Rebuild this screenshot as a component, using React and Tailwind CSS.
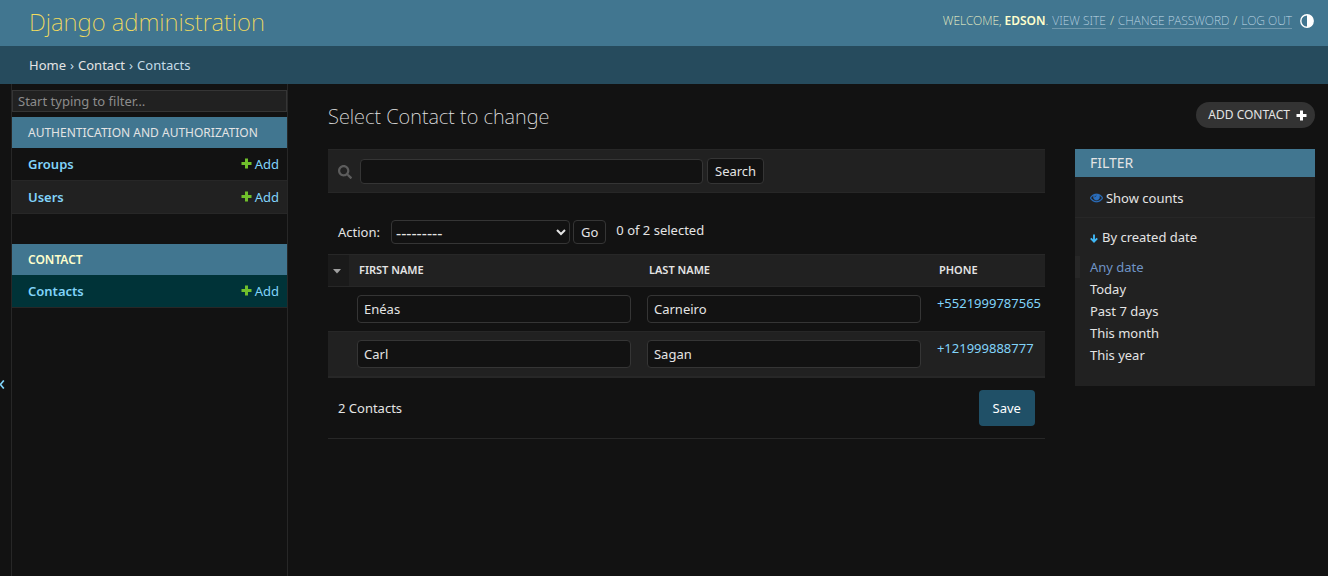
import React from "react";
import { FaSearch } from "react-icons/fa";

const contacts = [
  { id: 1, first: "Enéas", last: "Carneiro", phone: "+5521999787565" },
  { id: 2, first: "Carl", last: "Sagan", phone: "+121999888777" },
];

const dateFilters = ["Today", "Past 7 days", "This month", "This year"];

function PlusIcon({ className }) {
  return (
    <svg viewBox="0 0 11 11" className={className} aria-hidden="true">
      <path d="M4 0.500h3v3.500h3.500v3H7v3.500H4V7H0.500V4H4z" fill="currentColor" />
    </svg>
  );
}

function ThemeIcon() {
  return (
    <svg viewBox="0 0 14 14" className="size-3.5" aria-hidden="true">
      <circle cx="7" cy="7" r="6.2" fill="none" stroke="#fff" strokeWidth="1.4" />
      <path d="M7 0.8a6.2 6.2 0 0 1 0 12.4z" fill="#fff" />
    </svg>
  );
}

function EyeIcon() {
  return (
    <svg viewBox="0 0 1792 1792" className="mb-1 size-[13px]" aria-hidden="true">
      <path
        fill="#2b70bf"
        stroke="#2b70bf"
        strokeWidth="40"
        d="M1664 960q-152-236-381-353 61 104 61 225 0 185-131.500 316.500t-316.500 131.500-316.500-131.500-131.500-316.500q0-121 61-225-229 117-381 353 133 205 333.500 326.500t434.500 121.500 434.500-121.500 333.500-326.500zm-720-384q0-20-14-34t-34-14q-125 0-214.500 89.500t-89.500 214.500q0 20 14 34t34 14 34-14 14-34q0-86 61-147t147-61q20 0 34-14t14-34zm848 384q0 34-20 69-140 230-376.500 368.500t-499.500 138.500-499.500-139-376.500-368q-20-35-20-69t20-69q140-229 376.500-368t499.500-139 499.500 139 376.500 368q20 35 20 69z"
      />
      <circle cx="896" cy="832" r="300" fill="#2b70bf" />
      <path d="M720 832a176 176 0 0 1 176-176" fill="none" stroke="#212121" strokeWidth="70" />
    </svg>
  );
}

function ArrowIcon() {
  return (
    <svg viewBox="0 0 8 9" className="h-[9px] w-2" aria-hidden="true">
      <path d="M4 0.500V8M0.800 4.400L4 7.600L7.200 4.400" fill="none" stroke="#40b8f5" strokeWidth="1.900" />
    </svg>
  );
}

function ModelRow({ name, className }) {
  return (
    <li className={`flex h-[33px] items-center justify-between border-b border-[#272727] pt-0.5 pl-4 pr-2 text-[13px] text-[#81d4fa] ${className}`}>
      <a href={`#${name.toLowerCase()}`} className="font-semibold">{name}</a>
      <a href={`#add-${name.toLowerCase()}`} className="flex items-center gap-[3px]">
        <PlusIcon className="mb-1 size-[11px] text-[#70bf2b]" />
        Add
      </a>
    </li>
  );
}

function HeaderLink({ children }) {
  return (
    <a href="#account" className="border-b border-white/25 text-[#c4dce8]">
      {children}
    </a>
  );
}

function TextCell({ label, value }) {
  return (
    <td className="p-2 align-top">
      <input
        aria-label={label}
        defaultValue={value}
        className="block h-7 w-full rounded border border-[#353535] bg-[#121212] px-1.5 text-[13px] text-[#e4e4e4]"
      />
    </td>
  );
}

export default function App() {
  return (
    <div className="flex min-h-screen flex-col bg-[#121212] font-['Noto_Sans',sans-serif] text-[13px] text-[#e4e4e4]">
      <header className="flex h-[46px] items-center justify-between bg-[#417690] pl-[29px] pr-3.5 text-[#ffffcc]">
        <h1 className="pb-0.5 text-[24px] font-extralight text-[#f5dd5d]">
          <a href="#home">Django administration</a>
        </h1>
        <div className="flex items-center gap-2 pb-1">
          <div className="flex gap-1 text-[12px] leading-[14px] font-extralight uppercase">
            <span>Welcome, <strong className="font-semibold">Edson</strong>.</span>
            <HeaderLink>View site</HeaderLink>
            <span>/</span>
            <HeaderLink>Change password</HeaderLink>
            <span>/</span>
            <HeaderLink>Log out</HeaderLink>
          </div>
          <button type="button" aria-label="Toggle theme"><ThemeIcon /></button>
        </div>
      </header>

      <nav aria-label="Breadcrumbs" className="flex h-[38px] items-center gap-1 bg-[#264b5d] pt-0.5 pl-[29px] text-[13px] text-[#c4dce8]">
        <a href="#home" className="text-[#e4e4e4]">Home</a>
        <span>›</span>
        <a href="#contact" className="text-[#e4e4e4]">Contact</a>
        <span>›</span>
        <span>Contacts</span>
      </nav>

      <div className="flex grow">
        <button type="button" aria-label="Toggle navigation" className="flex w-3 shrink-0 items-center border-r border-[#272727] pt-[108px]">
          <svg viewBox="0 0 5 9" className="h-[9px] w-[5px]" aria-hidden="true">
            <path d="M3.800 0.500L0.400 4.500L3.800 8.500" fill="none" stroke="#81d4fa" strokeWidth="1.700" />
          </svg>
        </button>

        <nav aria-label="Sidebar" className="w-[276px] shrink-0 border-r border-[#272727] pt-1.5">
          <input
            aria-label="Filter navigation items"
            placeholder="Start typing to filter…"
            className="mb-[5px] block h-[22px] w-full border border-[#353535] bg-[#212121] px-[5px] text-[13px] placeholder:text-[#8c8c8c]"
          />
          <section className="mb-[30px]">
            <h2 className="flex h-[31px] items-center bg-[#417690] pl-4 text-xs uppercase">
              <a href="#auth">Authentication and Authorization</a>
            </h2>
            <ul>
              <ModelRow name="Groups" className="bg-[#121212]" />
              <ModelRow name="Users" className="bg-[#212121]" />
            </ul>
          </section>
          <section>
            <h2 className="flex h-[31px] items-center bg-[#417690] pl-4 text-xs font-semibold text-[#ffffcc] uppercase">
              <a href="#contact">Contact</a>
            </h2>
            <ul>
              <ModelRow name="Contacts" className="bg-[#003338]" />
            </ul>
          </section>
        </nav>

        <main className="min-w-0 grow pt-[18px] pr-[13px] pl-10">
          <div className="mb-[19px] flex items-start justify-between">
            <h2 className="pt-0.5 text-xl leading-[26px] font-extralight">Select Contact to change</h2>
            <a href="#add-contact" className="flex h-[26px] items-center gap-1.5 rounded-full bg-[#333333] pr-2 pl-3 text-xs uppercase">
              Add Contact
              <PlusIcon className="size-[11px] text-white" />
            </a>
          </div>

          <div className="flex items-start gap-[30px]">
            <div className="min-w-0 grow">
              <form className="flex h-11 items-center gap-1 border-y border-[#272727] bg-[#212121] pl-2.5" onSubmit={(e) => e.preventDefault()}>
                <label htmlFor="searchbar" className="flex w-[18px] pt-0.5 text-[#5c5c5c]">
                  <FaSearch className="size-3.5" aria-label="Search" />
                </label>
                <input id="searchbar" type="text" className="h-[25px] w-[343px] rounded border border-[#353535] bg-[#121212] px-1.5" />
                <button className="h-[26px] rounded border border-[#353535] bg-[#121212] px-[7px] pt-0.5">Search</button>
              </form>

              <div className="flex h-[61px] items-end pb-2.5 pl-2.5">
                <div className="flex h-6 items-center">
                  <label htmlFor="action" className="mr-[11px] pt-0.5">Action:</label>
                  <select id="action" className="mr-[3px] h-6 w-[179px] rounded border border-[#353535] bg-[#121212] text-base">
                    <option>---------</option>
                    <option>Delete selected Contacts</option>
                  </select>
                  <button type="button" className="mr-2.5 h-6 rounded border border-[#353535] bg-[#121212] px-[7px] pt-0.5">Go</button>
                  <span className="pb-0.5">0 of 2 selected</span>
                </div>
              </div>

              <table className="w-full table-fixed border-collapse">
                <thead>
                  <tr className="h-8 border-y border-[#272727] bg-[#212121] text-left text-[11px] leading-4 uppercase">
                    <th className="w-[21px] bg-[#1a1a1a]">
                      <svg viewBox="0 0 8 5" className="mt-0.5 ml-[5px] h-[5px] w-2" aria-label="Select all">
                        <path d="M0 0h8L4 4.500z" fill="#a0a0a0" />
                      </svg>
                    </th>
                    <th className="px-2.5 pb-0.5 font-semibold">First name</th>
                    <th className="px-2.5 pb-0.5 font-semibold">Last name</th>
                    <th className="w-[116px] px-2.5 pb-0.5 font-semibold">Phone</th>
                  </tr>
                </thead>
                <tbody>
                  {contacts.map((c) => (
                    <tr key={c.id} className="h-[45px] border-b border-[#272727] even:bg-[#212121]">
                      <td></td>
                      <TextCell label="First name" value={c.first} />
                      <TextCell label="Last name" value={c.last} />
                      <td className="p-2 align-top leading-4">
                        <a href="#phone" className="text-[#81d4fa]">{c.phone}</a>
                      </td>
                    </tr>
                  ))}
                </tbody>
              </table>

              <div className="flex h-[62px] items-center justify-between border-y border-[#272727] px-2.5">
                <span className="pt-0.5">2 Contacts</span>
                <button type="button" className="h-9 rounded bg-[#205067] px-3.5 pt-0.5 text-white">Save</button>
              </div>
            </div>

            <aside className="w-60 shrink-0 bg-[#212121] pb-5">
              <h2 className="flex h-7 items-center bg-[#417690] px-[15px] text-sm uppercase">Filter</h2>
              <div className="flex h-[41px] items-center border-b border-[#272727] px-[15px] pt-1">
                <a href="#counts" className="flex items-center gap-[3px]"><EyeIcon />Show counts</a>
              </div>
              <details open>
                <summary className="flex h-[38px] list-none items-center gap-1 px-[15px] pt-0.5">
                  <ArrowIcon />By created date
                </summary>
                <ul className="leading-[22px]">
                  <li className="border-l-[5px] border-[#272727] pl-2.5 text-[#6f94c6]">
                    <a href="#any">Any date</a>
                  </li>
                  {dateFilters.map((label) => (
                    <li key={label} className="px-[15px]">
                      <a href="#filter">{label}</a>
                    </li>
                  ))}
                </ul>
              </details>
            </aside>
          </div>
        </main>
      </div>
    </div>
  );
}
